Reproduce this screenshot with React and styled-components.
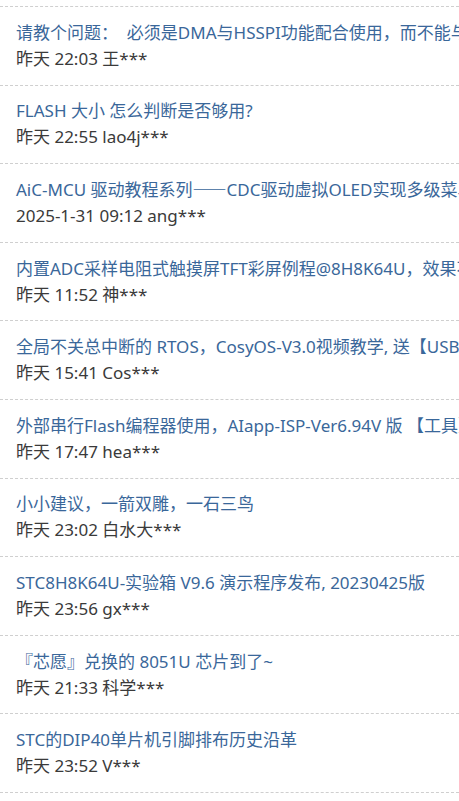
import styled, { createGlobalStyle } from "styled-components";

const threads = [
  { title: "请教个问题：\u00a0 必须是DMA与HSSPI功能配合使用，而不能与SPI中断配合使用吗", meta: "昨天 22:03 王***" },
  { title: "FLASH 大小 怎么判断是否够用?", meta: "昨天 22:55 lao4j***" },
  { title: "AiC-MCU 驱动教程系列——CDC驱动虚拟OLED实现多级菜单", meta: "2025-1-31 09:12 ang***" },
  { title: "内置ADC采样电阻式触摸屏TFT彩屏例程@8H8K64U，效果不错", meta: "昨天 11:52 神***" },
  { title: "全局不关总中断的 RTOS，CosyOS-V3.0视频教学, 送【USB-Link1D】", meta: "昨天 15:41 Cos***" },
  { title: "外部串行Flash编程器使用，AIapp-ISP-Ver6.94V 版 【工具】", meta: "昨天 17:47 hea***" },
  { title: "小小建议，一箭双雕，一石三鸟", meta: "昨天 23:02 白水大***" },
  { title: "STC8H8K64U-实验箱 V9.6 演示程序发布, 20230425版", meta: "昨天 23:56 gx***" },
  { title: "『芯愿』兑换的 8051U 芯片到了~", meta: "昨天 21:33 科学***" },
  { title: "STC的DIP40单片机引脚排布历史沿革", meta: "昨天 23:52 V***" },
];

const GlobalStyle = createGlobalStyle`
  html, body {
    margin: 0;
    padding: 0;
    background: #fff;
    overflow: hidden;
  }
  body {
    font-family: "Noto Sans", "Noto Sans CJK SC", sans-serif;
  }
`;

// em dashes look joined in the CJK font, so render those with it
function renderTitle(text) {
  return text.split(/(——)/).map((part, i) =>
    part === "——" ? <CjkDash key={i}>{part}</CjkDash> : part
  );
}

export default function App() {
  return (
    <>
      <GlobalStyle />
      <ThreadList>
        {threads.map((t, i) => (
          <ThreadItem key={i}>
            <ThreadTitle href="#">{renderTitle(t.title)}</ThreadTitle>
            <ThreadMeta>{t.meta}</ThreadMeta>
          </ThreadItem>
        ))}
      </ThreadList>
    </>
  );
}

const ThreadList = styled.ul`
  list-style: none;
  margin: 6px 0 0;
  padding: 0;
  border-top: 1px dashed #cfcfcf;
`;

const ThreadItem = styled.li`
  display: flex;
  flex-direction: column;
  padding: 12.8px 16px;
  border-bottom: 1px dashed #cfcfcf;
  font-size: 17px;
  line-height: 26px;
  white-space: nowrap;
  overflow: hidden;
`;

const ThreadTitle = styled.a`
  color: #3a679a;
  text-decoration: none;
`;

const CjkDash = styled.span`
  display: inline-block;
  line-height: 1;
  font-family: "Noto Sans CJK SC", sans-serif;
  font-feature-settings: "fwid";
`;

const ThreadMeta = styled.span`
  color: #3a3a3a;
`;
